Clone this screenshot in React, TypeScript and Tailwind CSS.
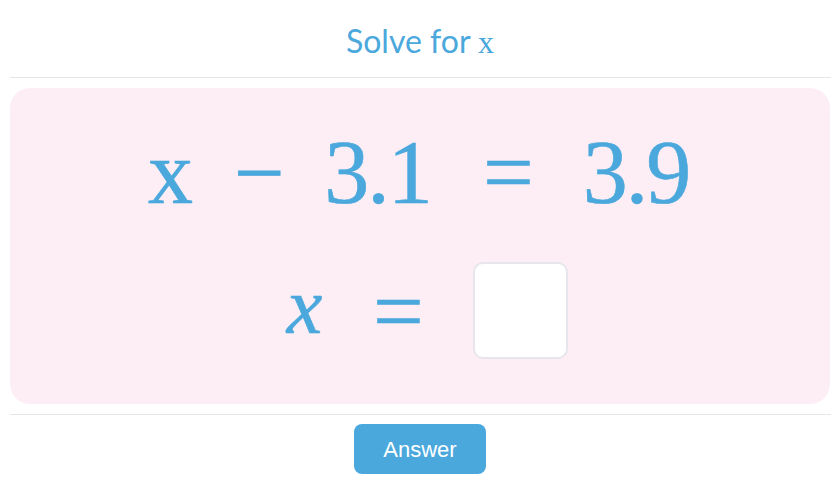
export default function App() {
  return (
    <div className="w-[840px] h-[501px] bg-white flex flex-col items-center">
      <div className="h-[77px] w-full flex items-center justify-center">
        <h1 className="text-[32px] text-[#4aa8dc] font-['Lato',sans-serif] leading-none pt-[6px]">
          Solve for <span className="font-['Liberation_Serif',serif]">x</span>
        </h1>
      </div>
      <div className="w-[821px] h-px bg-[#e6e6ea]" />
      <div className="mt-[10px] w-[820px] h-[316px] rounded-[20px] bg-[#fdeef5] flex flex-col items-center text-[#4aa8dc] font-['Liberation_Serif',serif] [-webkit-text-stroke:0.6px_#4aa8dc]">
        <div className="mt-[40px] mr-[8px] flex items-baseline text-[90px] leading-none">
          <span className="w-[89px] text-center">x</span>
          <span className="w-[89px] text-center">−</span>
          <span className="w-[147px] text-center tracking-[-2px]">3.1</span>
          <span className="w-[115px] text-center">=</span>
          <span className="w-[140px] text-center tracking-[-2px]">3.9</span>
        </div>
        <div className="mt-[44px] mr-[12px] h-[97px] flex items-center">
          <span className="w-[89px] text-center italic text-[80px] leading-none mb-[10px]">x</span>
          <span className="w-[99px] text-center text-[90px] leading-none mt-[2px]">=</span>
          <div className="ml-[25px] w-[95px] h-[97px] bg-white rounded-[10px] border-2 border-[#e6e6ec]" />
        </div>
      </div>
      <div className="mt-[10px] w-[821px] h-px bg-[#e6e6ea]" />
      <button className="mt-[9px] w-[132px] h-[50px] rounded-[8px] bg-[#4aa8dc] text-white text-[22px] font-['Liberation_Sans',sans-serif]">
        Answer
      </button>
    </div>
  );
}
